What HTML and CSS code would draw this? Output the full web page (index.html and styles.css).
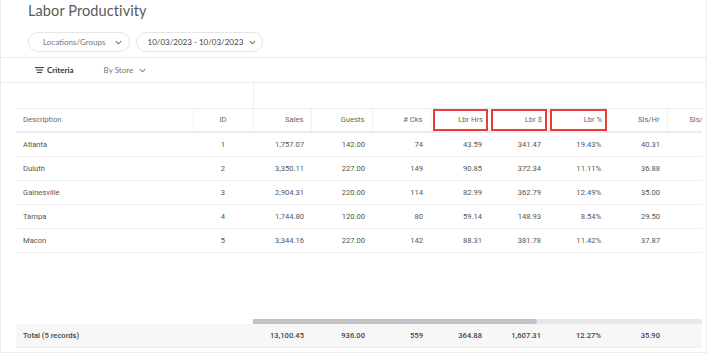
FILE: index.html
```html
<!DOCTYPE html>
<html>
<head>
<meta charset="utf-8">
<link rel="stylesheet" href="styles.css">
</head>
<body>
<div class="page">
  <h1 class="title">Labor Productivity</h1>
  <div class="filters">
    <button class="pill pill-muted">Locations/Groups
      <svg class="chev" viewBox="0 0 8 5" width="7" height="5"><path d="M1 1 L4 4 L7 1" fill="none" stroke="#777" stroke-width="1.3"/></svg>
    </button>
    <button class="pill">10/03/2023 - 10/03/2023
      <svg class="chev" viewBox="0 0 8 5" width="7" height="5"><path d="M1 1 L4 4 L7 1" fill="none" stroke="#777" stroke-width="1.3"/></svg>
    </button>
  </div>
  <div class="criteria-bar">
    <span class="criteria">
      <svg viewBox="0 0 9 6" width="9" height="6"><path d="M0 0.6 H9 M1 3 H8 M2 5.4 H7" stroke="#333" stroke-width="1"/></svg>
      Criteria
    </span>
    <span class="bystore">By Store
      <svg class="chev" viewBox="0 0 8 5" width="7" height="5"><path d="M1 1 L4 4 L7 1" fill="none" stroke="#888" stroke-width="1.3"/></svg>
    </span>
  </div>
  <div class="table-area">
    <div class="table-clip">
      <table class="grid">
        <colgroup>
          <col class="c-desc"><col class="c-id"><col class="c-sales"><col class="c-guests"><col class="c-cks">
          <col class="c-n"><col class="c-n"><col class="c-pct"><col class="c-n"><col class="c-last">
        </colgroup>
        <thead>
          <tr class="group-row">
            <th colspan="2" class="g-fixed"></th>
            <th colspan="8" class="g-rest"></th>
          </tr>
          <tr class="head-row">
            <th class="left">Description</th>
            <th class="center">ID</th>
            <th>Sales</th>
            <th>Guests</th>
            <th># Cks</th>
            <th class="hl"><div class="box">Lbr Hrs</div></th>
            <th class="hl"><div class="box">Lbr $</div></th>
            <th class="hl"><div class="box">Lbr %</div></th>
            <th>Sls/Hr</th>
            <th>Sls/Guest</th>
          </tr>
        </thead>
        <tbody>
          <tr><td class="left">Atlanta</td><td class="center">1</td><td>1,757.07</td><td>142.00</td><td>74</td><td>43.59</td><td>341.47</td><td>19.43%</td><td>40.31</td><td>12.37</td></tr>
          <tr><td class="left">Duluth</td><td class="center">2</td><td>3,350.11</td><td>227.00</td><td>149</td><td>90.85</td><td>372.34</td><td>11.11%</td><td>36.88</td><td>14.76</td></tr>
          <tr><td class="left">Gainesville</td><td class="center">3</td><td>2,904.31</td><td>220.00</td><td>114</td><td>82.99</td><td>362.79</td><td>12.49%</td><td>35.00</td><td>13.20</td></tr>
          <tr><td class="left">Tampa</td><td class="center">4</td><td>1,744.80</td><td>120.00</td><td>80</td><td>59.14</td><td>148.93</td><td>8.54%</td><td>29.50</td><td>14.54</td></tr>
          <tr><td class="left">Macon</td><td class="center">5</td><td>3,344.16</td><td>227.00</td><td>142</td><td>88.31</td><td>381.78</td><td>11.42%</td><td>37.87</td><td>14.73</td></tr>
        </tbody>
      </table>
    </div>
    <div class="spacer"></div>
    <div class="scroll-row">
      <div class="scroll-fixed"></div>
      <div class="scroll-track"><div class="scroll-thumb"></div></div>
    </div>
    <div class="table-clip">
      <table class="grid total">
        <colgroup>
          <col class="c-desc"><col class="c-id"><col class="c-sales"><col class="c-guests"><col class="c-cks">
          <col class="c-n"><col class="c-n"><col class="c-pct"><col class="c-n"><col class="c-last">
        </colgroup>
        <tbody>
          <tr><td class="left">Total (5 records)</td><td class="center"></td><td>13,100.45</td><td>936.00</td><td>559</td><td>364.88</td><td>1,607.31</td><td>12.27%</td><td>35.90</td><td>14.00</td></tr>
        </tbody>
      </table>
    </div>
  </div>
</div>
</body>
</html>
```

FILE: styles.css
```css
* { box-sizing: border-box; }
html, body { margin: 0; padding: 0; background: #fff; }
body { font-family: Lato, "Open Sans", sans-serif; color: #555; }

.page {
  width: 707px;
  height: 353px;
  border-left: 1px solid #ececec;
  border-right: 1px solid #ececec;
  border-bottom: 1px solid #ececec;
  overflow: hidden;
}

.title {
  margin: 0;
  padding: 1px 0 0 27px;
  font-size: 14.5px;
  font-weight: 400;
  color: #5a5a5a;
  line-height: 20px;
  letter-spacing: 0.1px;
}

.filters {
  display: flex;
  gap: 6px;
  padding: 11px 0 0 27px;
  height: 36px;
}
.pill {
  height: 20px;
  display: flex;
  align-items: center;
  gap: 6px;
  padding: 0 6px 0 11px;
  border: 1px solid #e6e6e6;
  border-radius: 10px;
  background: #fff;
  font-family: Lato, sans-serif;
  font-size: 8px;
  color: #444;
}
.pill-muted { color: #777; padding: 0 7px 0 14px; gap: 9px; }
.chev { display: block; }

.criteria-bar {
  height: 26px;
  border-top: 1px solid #ececec;
  border-bottom: 1px solid #ececec;
  display: flex;
  align-items: center;
  padding-left: 34px;
  gap: 30px;
  font-size: 8px;
}
.criteria {
  display: flex;
  align-items: center;
  gap: 3px;
  font-weight: 700;
  color: #333;
}
.bystore {
  display: flex;
  align-items: center;
  gap: 6px;
  color: #777;
}

.table-area {
  padding-left: 15px;
  width: 701px;
}
.table-clip {
  width: 686px;
  overflow: hidden;
}
.grid {
  border-collapse: collapse;
  table-layout: fixed;
  width: 714px;
  font-family: Roboto, "Liberation Sans", sans-serif;
  font-size: 7.6px;
  color: #555;
}
.c-desc { width: 177px; }
.c-id { width: 60px; }
.c-sales { width: 58px; }
.c-guests { width: 61px; }
.c-cks { width: 58px; }
.c-n { width: 59px; }
.c-pct { width: 60px; }
.c-last { width: 63px; }

.grid th, .grid td {
  text-align: right;
  padding: 0 7px;
  white-space: nowrap;
  font-weight: 400;
}
.grid .left { text-align: left; padding-left: 7px; }
.grid .center { text-align: center; padding: 0; }

.group-row th { height: 25px; border-bottom: 1px solid #eeeeee; }
.group-row .g-fixed { border-right: 1px solid #eeeeee; }

.head-row th {
  height: 24px;
  color: #666;
  border-right: 1px solid #f1f1f1;
  border-bottom: 2px solid #ececec;
}
.head-row th.hl { padding: 0 1px 0 2px; border-right: none; }
.box {
  height: 22px;
  border: 2px solid #ea3c3c;
  display: flex;
  align-items: center;
  justify-content: flex-end;
  padding-right: 3px;
}

.grid tbody td {
  height: 24px;
  border-bottom: 1px solid #efefef;
}

.spacer { height: 66px; }
.scroll-row { display: flex; height: 5px; width: 686px; }
.scroll-fixed { width: 237px; }
.scroll-track { flex: 1; background: #e8e8e8; }
.scroll-thumb { width: 284px; height: 5px; background: #c3c3c3; border-radius: 0 3px 3px 0; }

.total td {
  height: 24px;
  background: #f7f7f7;
  border-bottom: 1px solid #e6e6e6;
  color: #444;
  font-weight: 500;
}
```
